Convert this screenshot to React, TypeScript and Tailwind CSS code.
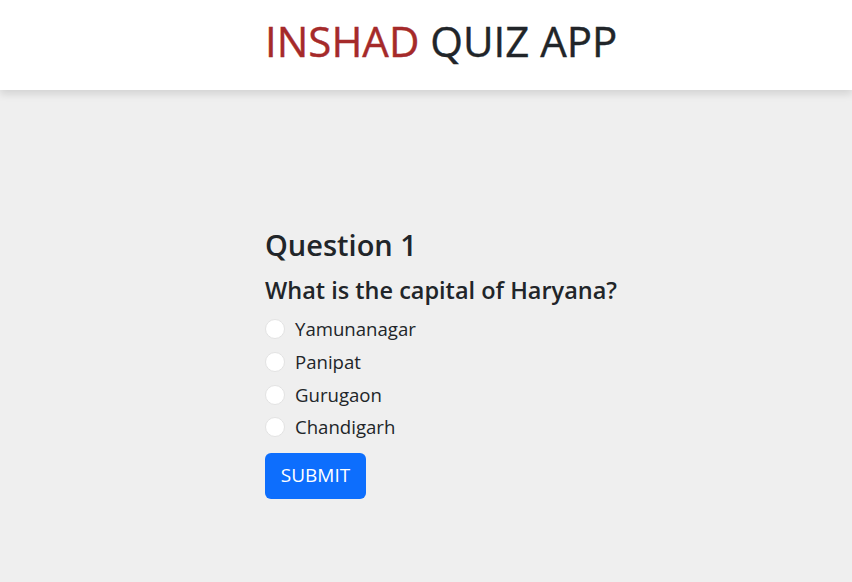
import React from 'react';

const options = ['Yamunanagar', 'Panipat', 'Gurugaon', 'Chandigarh'];

const App: React.FC = () => {
  return (
    <div className="min-h-[582px] bg-[#efefef] text-[#212529] font-['Open_Sans',sans-serif]">
      <header className="h-[90px] bg-white shadow-[0_4px_8px_rgba(0,0,0,0.12)] flex items-center pl-[265px] pb-[8px]">
        <h1 className="text-[42px] font-medium leading-none [-webkit-text-stroke:0.4px_currentColor]">
          <span className="text-[#a52a2a]">INSHAD</span> QUIZ APP
        </h1>
      </header>
      <main className="pl-[265px] pt-[138px]">
        <h2 className="text-[29px] font-semibold leading-[1.2] mb-[13px]">Question 1</h2>
        <h4 className="text-[23.5px] font-semibold leading-[1.2] mb-[9px]">What is the capital of Haryana?</h4>
        <div className="flex flex-col">
          {options.map((o) => (
            <label key={o} className="flex items-center gap-[10px] h-[32.7px] text-[18.6px]">
              <span className="w-[20px] h-[20px] rounded-full bg-white border border-[#e3e3e3]" />
              {o}
            </label>
          ))}
        </div>
        <button className="mt-[9px] w-[101px] h-[46px] rounded-[6px] bg-[#0d6efd] text-white text-[19px]">
          SUBMIT
        </button>
      </main>
    </div>
  );
};

export default App;
